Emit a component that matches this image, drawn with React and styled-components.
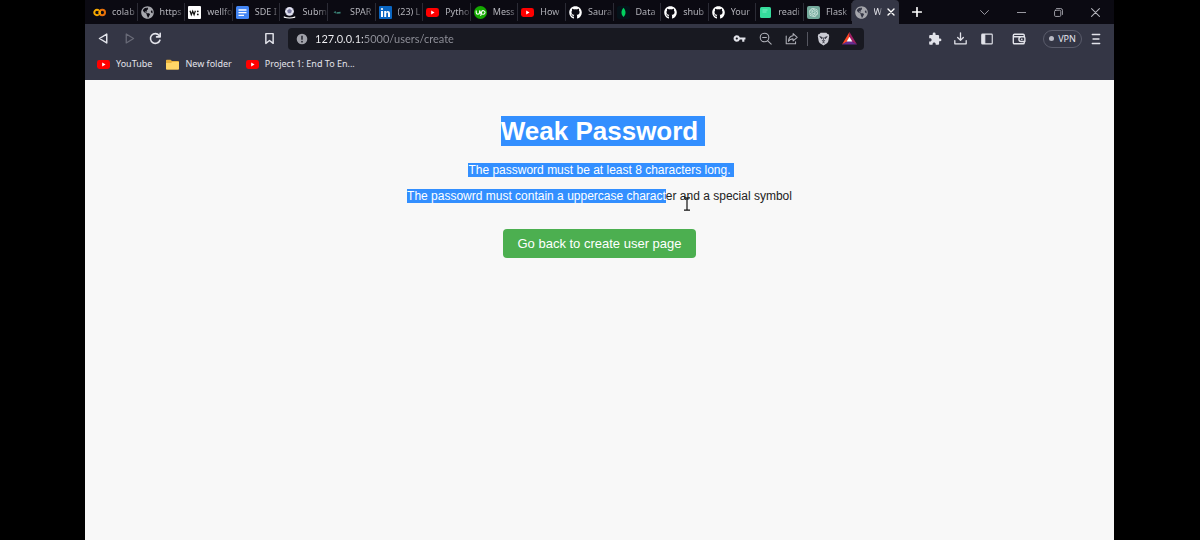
import React from "react";
import styled, { createGlobalStyle, css } from "styled-components";
import { FaGithub, FaGlobeAmericas } from "react-icons/fa";
import { MdExtension, MdVpnKey } from "react-icons/md";
import { SiOpenai } from "react-icons/si";

const GlobalStyle = createGlobalStyle`
  *, *::before, *::after { box-sizing: border-box; }
  body { margin: 0; background: #000; font-family: "Noto Sans", "Open Sans", sans-serif; }
  button, input { font: inherit; color: inherit; border: 0; padding: 0; background: none; }
  a { color: inherit; text-decoration: none; }
  svg { display: block; flex: none; }
`;

const Screen = styled.div`
  min-height: 100vh;
  padding: 0 86px 0 85px;
  display: flex;
  background: #000;
`;

const BrowserWindow = styled.div`
  flex: 1;
  min-width: 0;
  display: flex;
  flex-direction: column;
`;

const TitleBar = styled.header`
  height: 24px;
  padding-left: 5px;
  display: flex;
  background: #0b0a12;
`;

const TabList = styled.div`
  flex: 0 1 809px;
  min-width: 0;
  display: flex;
`;

const Tab = styled.div`
  flex: 1 1 0;
  min-width: 0;
  height: 24px;
  display: flex;
  align-items: center;
  color: #b4b4bb;
  ${(p) =>
    p.$active
      ? css`
          background: #343645;
          color: #e4e4ea;
          border-radius: 4px 4px 0 0;
        `
      : css`
          &::after {
            content: "";
            width: 1px;
            height: 18px;
            background: #2b2b35;
          }
        `}
`;

const TabButton = styled.button`
  flex: 1;
  min-width: 0;
  height: 100%;
  padding-left: 3px;
  display: flex;
  align-items: center;
  gap: 6px;
  text-align: left;
`;

const TabTitle = styled.span`
  flex: 1;
  min-width: 0;
  overflow: hidden;
  white-space: nowrap;
  font-size: 9px;
  line-height: 14px;
  mask-image: linear-gradient(90deg, #000 60%, rgba(0, 0, 0, 0.2));
`;

const CloseTab = styled.button`
  width: 17px;
  height: 16px;
  display: grid;
  place-items: center;
  color: #fff;
`;

const NewTab = styled.button`
  width: 36px;
  display: grid;
  place-items: center;
  color: #fff;
`;

const WindowControls = styled.div`
  margin-left: auto;
  display: flex;
`;

const WindowButton = styled.button`
  width: 37px;
  display: grid;
  place-items: center;
  color: #b4b4bc;
`;

const Toolbar = styled.div`
  background: #343645;
`;

const NavRow = styled.div`
  height: 29px;
  display: flex;
  align-items: center;
`;

const NavButtons = styled.div`
  width: 203px;
  padding: 0 11px;
  display: flex;
  align-items: center;
  gap: 11px;
`;

const tones = { bright: "#e2e3ea", soft: "#b0b1b9", dim: "#686a77" };

const IconButton = styled.button`
  width: 15px;
  height: 15px;
  display: grid;
  place-items: center;
  color: ${(p) => tones[p.$tone || "bright"]};
  margin-left: ${(p) => (p.$pushRight ? "auto" : "0")};
`;

const AddressBar = styled.div`
  flex: 1;
  min-width: 0;
  height: 22px;
  padding: 0 7px 0 8px;
  display: flex;
  align-items: center;
  gap: 7px;
  border-radius: 4px;
  background: #181921;
`;

const AddressInput = styled.input`
  flex: 1;
  min-width: 0;
  height: 20px;
  font-family: Lato, "Noto Sans", sans-serif;
  font-size: 11px;
  outline: 0;
  color: transparent;
  background: linear-gradient(90deg, #f3f3f6 48px, #92939c 48px);
  background-clip: text;
`;

const AddressActions = styled.div`
  display: flex;
  align-items: center;
  gap: 11px;
`;

const Divider = styled.span`
  width: 1px;
  height: 14px;
  margin: 0 -3px;
  background: #565761;
`;

const Tools = styled.div`
  width: 250px;
  padding-right: 11px;
  display: flex;
  align-items: center;
  justify-content: flex-end;
  gap: 17px;
`;

const ToolGroup = styled.div`
  display: flex;
  gap: 11px;
`;

const VpnButton = styled.button`
  height: 18px;
  width: 39px;
  margin-right: -11px;
  display: flex;
  align-items: center;
  justify-content: center;
  gap: 4px;
  border: 1px solid #5a5c6b;
  border-radius: 9px;
  font-size: 9px;
  color: #e6e6ee;
  &::before {
    content: "";
    width: 5px;
    height: 5px;
    border-radius: 50%;
    background: #b9bac4;
  }
`;

const Bookmarks = styled.nav`
  height: 27px;
  padding: 0 12px 5px;
  display: flex;
  align-items: center;
  gap: 14px;
`;

const Bookmark = styled.a`
  display: flex;
  align-items: center;
  gap: 6px;
  white-space: nowrap;
  font-size: 9px;
  line-height: 14px;
  color: #e3e3ea;
`;

const Page = styled.main`
  flex: 1;
  padding: 36px 20px;
  display: flex;
  flex-direction: column;
  align-items: center;
  background: #f8f8f8;
  color: #222;
  font-family: "Liberation Sans", Arial, sans-serif;
`;

const Heading = styled.h1`
  margin: 0 0 17px;
  font-size: 26px;
  line-height: 30px;
`;

const Message = styled.p`
  position: relative;
  margin: 0 0 12px;
  font-size: 12px;
  line-height: 14px;
`;

const Selected = styled.span`
  display: inline-block;
  background: #338fff;
  color: #fff;
  ${(p) =>
    p.$lineEnd &&
    css`
      padding-right: ${p.$lineEnd}px;
      margin-right: -${p.$lineEnd}px;
    `}
`;

const Pointer = styled.svg`
  position: absolute;
  right: 101px;
  top: 8px;
`;

const BackLink = styled.a`
  margin-top: 14px;
  padding: 7px 14px;
  border-radius: 4px;
  background: #4caf50;
  color: #fff;
  font-size: 13px;
  line-height: 15px;
`;

const Line = ({ size = 13, width = 1.5, children }) => (
  <svg
    width={size}
    height={size}
    viewBox="0 0 16 16"
    fill="none"
    stroke="currentColor"
    strokeWidth={width}
    strokeLinecap="round"
    strokeLinejoin="round"
  >
    {children}
  </svg>
);

const YouTubeIcon = () => (
  <svg width="13" height="13" viewBox="0 0 13 13">
    <rect y="2" width="13" height="9" rx="2.4" fill="#f00" />
    <path d="M5.2 4.6v3.8l3.3-1.9z" fill="#fff" />
  </svg>
);

const ColabIcon = () => (
  <svg width="13" height="13" viewBox="0 0 13 13" fill="none" strokeWidth="2">
    <path d="M5.9 4.6A2.7 2.7 0 1 0 5.9 8.4" stroke="#f9ab00" />
    <circle cx="9.3" cy="6.5" r="2.7" stroke="#e8710a" />
    <path d="M7.4 8.4A2.7 2.7 0 0 1 7.4 4.6" stroke="#f9ab00" />
  </svg>
);

const WellfoundIcon = () => (
  <svg width="13" height="13" viewBox="0 0 13 13">
    <rect width="13" height="13" rx="1" fill="#fff" />
    <path d="M2 4.8l1.3 4 1.4-3.6 1.4 3.6 1.3-4" fill="none" stroke="#111" strokeWidth="1.2" />
    <circle cx="9.8" cy="5.3" r="0.9" fill="#111" />
    <circle cx="9.8" cy="8.4" r="0.9" fill="#111" />
  </svg>
);

const DocIcon = () => (
  <svg width="13" height="13" viewBox="0 0 13 13">
    <rect width="13" height="13" rx="1.5" fill="#4285f4" />
    <path d="M2.5 4h8M2.5 6.7h8M2.5 9.4h5.5" stroke="#fff" strokeWidth="1.3" />
  </svg>
);

const BallIcon = () => (
  <svg width="13" height="13" viewBox="0 0 13 13">
    <circle cx="6.5" cy="5.3" r="4.4" fill="#e4e4f2" />
    <path d="M6.5 3.2l2 1.4-.8 2.3H5.3l-.8-2.3zM3 2.5l1 .6M10 2.5l-1 .6M3.2 8l1-.7M9.8 8l-1-.7" fill="#77779d" stroke="#77779d" strokeWidth=".7" />
    <path d="M.8 10.2q5.7 2.4 11.4 0v1.6q-5.7 1.4-11.4 0z" fill="#fff" />
  </svg>
);

const SparkIcon = () => (
  <svg width="13" height="13" viewBox="0 0 13 13">
    <path d="M2.5 6.3l2.2-1.2.3 2.5zM5.5 6.2l4-.5v1.8l-4 .2z" fill="#3c8478" />
  </svg>
);

const LinkedInIcon = () => (
  <svg width="13" height="13" viewBox="0 0 13 13">
    <rect width="13" height="13" rx="1" fill="#0a66c2" />
    <path d="M2 5h2v6H2zM5.2 5H7v.9C8.3 4.2 11 4.7 11 7.4V11H9V7.7C9 6 7.2 6.1 7.2 7.7V11h-2z" fill="#fff" />
    <circle cx="3" cy="3" r="1.1" fill="#fff" />
  </svg>
);

const UpworkIcon = () => (
  <svg width="13" height="13" viewBox="0 0 13 13">
    <circle cx="6.5" cy="6.5" r="6.5" fill="#14a800" />
    <path d="M2.2 4.5v2.1a1.7 1.7 0 0 0 3.4 0V4.5c.5 2 1.4 3.4 2.7 3.8M6.6 9.8l1-4a1.8 1.8 0 1 1 1.6 2.5c-1.2 0-2-.8-2.6-1.8" fill="none" stroke="#fff" strokeWidth="1.1" />
  </svg>
);

const LeafIcon = () => (
  <svg width="13" height="13" viewBox="0 0 13 13">
    <rect width="13" height="13" rx="2" fill="#04131a" />
    <path d="M6.5 1.8C9.4 5.2 9 8.4 6.5 11 4 8.400 3.600 5.200 6.500 1.800z" fill="#00d25f" />
  </svg>
);

const ReadIcon = () => (
  <svg width="13" height="13" viewBox="0 0 13 13">
    <rect x="1" y="1" width="11" height="11" rx="1.5" fill="#35dc9c" />
    <path d="M3.5 4h5M3.5 6h4" stroke="#7deec3" strokeWidth="1.2" />
  </svg>
);

const ChatIcon = () => (
  <svg width="13" height="13" viewBox="0 0 13 13">
    <rect width="13" height="13" rx="2" fill="#74aa9c" />
    <g transform="translate(2 2)">
      <SiOpenai size={9} color="#e4f4ef" />
    </g>
  </svg>
);

const FolderIcon = () => (
  <svg width="13" height="13" viewBox="0 0 13 13">
    <path d="M0 2.500q0-.8.8-.8h3.700L6 3h6.200q.8 0 .8.8v7q0 .8-.8.8H.8q-.8 0-.8-.8z" fill="#e8b13c" />
    <path d="M0 5h5l1.300-1.100H13v6.900q0 .8-.8.8H.8q-.8 0-.8-.8z" fill="#ffd667" />
  </svg>
);

const InfoIcon = () => (
  <svg width="12" height="12" viewBox="0 0 12 12">
    <circle cx="6" cy="6" r="5.3" fill="#a0a1a9" />
    <path d="M6 2.800v4" stroke="#22232c" strokeWidth="1.5" />
    <circle cx="6" cy="8.7" r=".9" fill="#22232c" />
  </svg>
);

const BraveShield = () => (
  <svg width="13" height="14" viewBox="0 0 13 14">
    <path d="M3.600.8h5.800l1.100 1.200 1.200.2.500 2-.9 5.100q-.3 1.200-1.300 1.900L6.500 13.500 3 11.200Q2 10.500 1.700 9.300L.8 4.200l.5-2L2.500 2z" fill="#c9cad2" />
    <path d="M2.800 4.600l2.500.9-.5 1.400zM10.200 4.600l-2.500.9.5 1.400zM6.500 5.500v2.800M4.900 8.400l1.600 1 1.600-1M5.400 11l1.100-.8 1.100.8" fill="#3a3b46" stroke="#3a3b46" strokeWidth=".8" />
  </svg>
);

const WalletIcon = () => (
  <Line size={14} width={1.6}>
    <path d="M14 5.500V3.800q0-1.300-1.300-1.300H3Q1.500 2.500 1.500 4v8.200q0 1.300 1.300 1.300h9.900q1.300 0 1.300-1.300v-1.400M1.500 5.500h11.700q1.500 0 1.500 1.400v3.900H10.500a2.600 2.600 0 0 1 0-5.200" />
    <path d="M11 8.200h.4" />
  </Line>
);

const RewardsTriangle = () => (
  <svg width="15" height="13" viewBox="0 0 15 13">
    <path d="M7.500 0L0 12.500 7.500 8.500z" fill="#ff4724" />
    <path d="M7.500 0L15 12.500 7.500 8.500z" fill="#9e1f63" />
    <path d="M0 12.500h15L7.500 8z" fill="#662d91" />
    <path d="M7.500 4.800L4.700 9.600h5.600z" fill="#fff" />
  </svg>
);

const globe = <FaGlobeAmericas size={13} color="#a5a6ac" />;
const github = <FaGithub size={13} color="#fff" />;

const tabs = [
  { title: "colab", icon: <ColabIcon /> },
  { title: "https", icon: globe },
  { title: "wellfo", icon: <WellfoundIcon /> },
  { title: "SDE I", icon: <DocIcon /> },
  { title: "Subm", icon: <BallIcon /> },
  { title: "SPAR", icon: <SparkIcon /> },
  { title: "(23) L", icon: <LinkedInIcon /> },
  { title: "Pytho", icon: <YouTubeIcon /> },
  { title: "Mess", icon: <UpworkIcon /> },
  { title: "How", icon: <YouTubeIcon /> },
  { title: "Saura", icon: github },
  { title: "Data", icon: <LeafIcon /> },
  { title: "shub", icon: github },
  { title: "Your", icon: github },
  { title: "readi", icon: <ReadIcon /> },
  { title: "Flask", icon: <ChatIcon /> },
  { title: "W", icon: globe, active: true },
];

const bookmarks = [
  { title: "YouTube", icon: <YouTubeIcon /> },
  { title: "New folder", icon: <FolderIcon /> },
  { title: "Project 1: End To En...", icon: <YouTubeIcon /> },
];

export default function App() {
  return (
    <Screen>
      <GlobalStyle />
      <BrowserWindow>
        <TitleBar>
          <TabList>
            {tabs.map((t, i) => (
              <Tab key={i} $active={t.active}>
                <TabButton>
                  {t.icon}
                  <TabTitle>{t.title}</TabTitle>
                </TabButton>
                {t.active && (
                  <CloseTab aria-label="Close tab">
                    <Line size={8} width={2.8}><path d="M2 2l12 12M14 2L2 14" /></Line>
                  </CloseTab>
                )}
              </Tab>
            ))}
          </TabList>
          <NewTab aria-label="New tab">
            <Line size={10} width={2.6}><path d="M8 1v14M1 8h14" /></Line>
          </NewTab>
          <WindowControls>
            <WindowButton aria-label="Search tabs">
              <Line size={9}><path d="M1 4.500l7 7 7-7" /></Line>
            </WindowButton>
            <WindowButton aria-label="Minimize">
              <Line size={9}><path d="M0 8h16" /></Line>
            </WindowButton>
            <WindowButton aria-label="Restore">
              <Line size={9}><rect x="1" y="4" width="11" height="11" rx="2" /><path d="M4.500 1H12q3 0 3 3v7.500" /></Line>
            </WindowButton>
            <WindowButton aria-label="Close">
              <Line size={9} width={1.8}><path d="M1 1l14 14M15 1L1 15" /></Line>
            </WindowButton>
          </WindowControls>
        </TitleBar>

        <Toolbar>
          <NavRow>
            <NavButtons>
              <IconButton aria-label="Back">
                <Line width={1.8}><path d="M12 2.500v11L3 8z" /></Line>
              </IconButton>
              <IconButton aria-label="Forward" $tone="dim">
                <Line width={1.6}><path d="M4 2.500v11L13 8z" /></Line>
              </IconButton>
              <IconButton aria-label="Reload">
                <Line width={1.9}><path d="M13.500 10A6 6 0 1 1 12.500 4.200M13.800 1.500v4.500H9.300" /></Line>
              </IconButton>
              <IconButton aria-label="Bookmark this page" $pushRight>
                <Line width={1.8}><path d="M3.500 2h9v12L8 10.500 3.500 14z" /></Line>
              </IconButton>
            </NavButtons>
            <AddressBar>
              <InfoIcon />
              <AddressInput aria-label="Address" defaultValue="127.0.0.1:5000/users/create" />
              <AddressActions>
                <IconButton aria-label="Passwords">
                  <MdVpnKey size={13} />
                </IconButton>
                <IconButton aria-label="Zoom" $tone="soft">
                  <Line width={1.3}><circle cx="6.8" cy="6.8" r="5.3" /><path d="M10.800 10.800L15 15M4.500 6.800h4.600" /></Line>
                </IconButton>
                <IconButton aria-label="Share" $tone="soft">
                  <Line width={1.3}><path d="M1.500 5v9.500h11.500V12M10 2l5 4.500-5 4.500V8.500C7.500 8.300 5.700 9.200 4.300 11.500 4.500 7.500 6.500 5 10 4.700z" /></Line>
                </IconButton>
                <Divider />
                <IconButton aria-label="Shields">
                  <BraveShield />
                </IconButton>
                <IconButton aria-label="Rewards">
                  <RewardsTriangle />
                </IconButton>
              </AddressActions>
            </AddressBar>
            <Tools>
              <ToolGroup>
                <IconButton aria-label="Extensions">
                  <MdExtension size={14} />
                </IconButton>
                <IconButton aria-label="Downloads">
                  <Line width={1.6}><path d="M8 1v9M4.500 6.800L8 10.300l3.500-3.500M1 10.500V14.500h14v-4" /></Line>
                </IconButton>
                <IconButton aria-label="Sidebar">
                  <Line size={12} width={1.5}><rect x="1" y="1.5" width="14" height="13" rx="1" /><path d="M2 2h3v12H2z" fill="currentColor" /></Line>
                </IconButton>
              </ToolGroup>
              <IconButton aria-label="Wallet">
                <WalletIcon />
              </IconButton>
              <VpnButton>VPN</VpnButton>
              <IconButton aria-label="Menu">
                <Line size={12} width={1.7}><path d="M3 2h10M4 8h8M3 14h10" /></Line>
              </IconButton>
            </Tools>
          </NavRow>
          <Bookmarks>
            {bookmarks.map((b) => (
              <Bookmark key={b.title} href="#">
                {b.icon}
                {b.title}
              </Bookmark>
            ))}
          </Bookmarks>
        </Toolbar>

        <Page>
          <Heading><Selected $lineEnd={7}>Weak Password</Selected></Heading>
          <Message><Selected $lineEnd={3}>The password must be at least 8 characters long.</Selected></Message>
          <Message>
            <Selected>The passowrd must contain a uppercase charact</Selected>er and a special symbol
            <Pointer width="8" height="14" viewBox="0 0 8 14" fill="none" stroke="#111" strokeWidth="1.2">
              <path d="M1 .8h2.200L4 1.500l.8-.7H7M4 1.500v11M1 13.200h2.200l.8-.7.8.7H7" />
            </Pointer>
          </Message>
          <BackLink href="#">Go back to create user page</BackLink>
        </Page>
      </BrowserWindow>
    </Screen>
  );
}
